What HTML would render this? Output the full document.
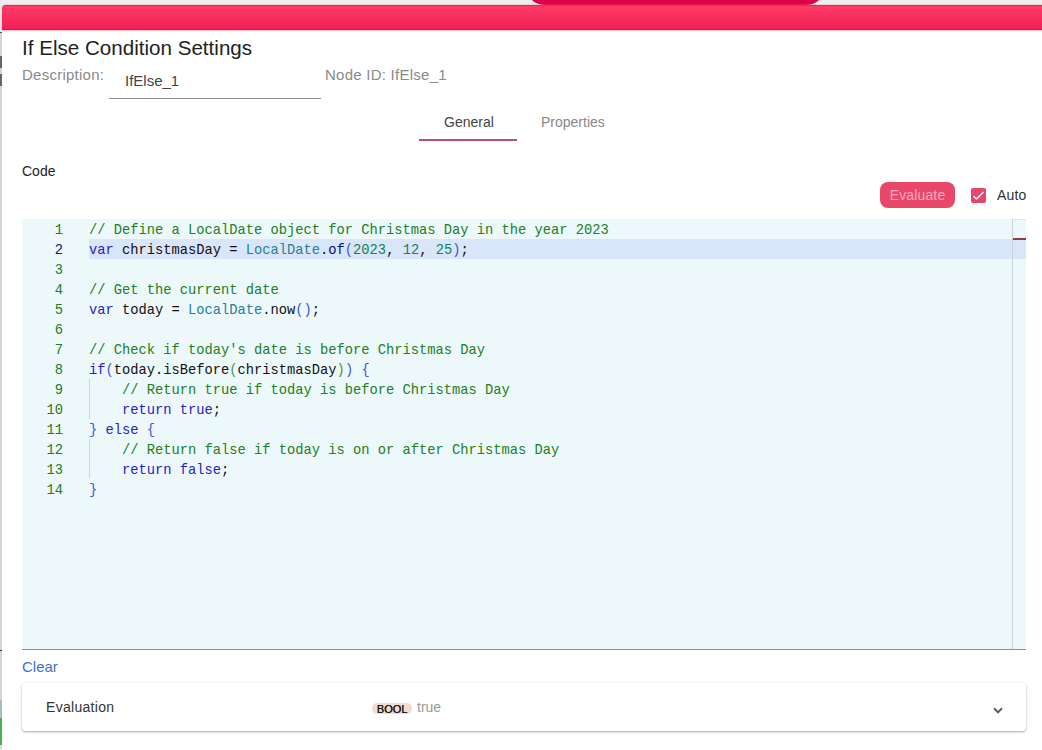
<!DOCTYPE html>
<html><head><meta charset="utf-8">
<style>
*{margin:0;padding:0;box-sizing:border-box}
html,body{width:1042px;height:750px;overflow:hidden;background:#fff;font-family:"Liberation Sans",sans-serif}
.abs{position:absolute}
#topbg{left:0;top:0;width:1042px;height:6px;background:#eeefef}
#tab{left:525px;top:-20px;width:301px;height:24.7px;background:#dc0044;border-radius:0 0 20px 20px}
#leftstrip{left:0;top:0;width:2px;height:750px;background:#d4d4d4}
#bar{left:2px;top:5px;width:1040px;height:25px;border-radius:4px 0 0 0;background:linear-gradient(#ff3d68,#f01e55);box-shadow:inset 0 1px 0 rgba(100,50,65,.4),inset 0 -1px 0 rgba(130,20,50,.3),0 -1px 1px rgba(255,110,140,.25),0 1px 2px rgba(240,40,90,.35)}
#dlg{left:2px;top:30px;width:1040px;height:720px;background:#fff}
.t{position:absolute;white-space:pre;line-height:1}
#title{left:22px;top:37.5px;font-size:20.6px;letter-spacing:0;color:#222}
#desc{left:22px;top:67px;font-size:15px;letter-spacing:.25px;color:#8a8a8a}
#inp{left:125px;top:73px;font-size:15px;color:#444}
#inpline{left:109px;top:98px;width:212px;height:1px;background:#8d8d8d}
#nodeid{left:325px;top:67px;font-size:15px;letter-spacing:.25px;color:#8a8a8a}
#tgen{left:444px;top:115px;font-size:14px;color:#444}
#tprop{left:541px;top:115px;font-size:14px;color:#888}
#tline{left:419px;top:139px;width:98px;height:2px;background:#bb5169}
#code{left:22px;top:164px;font-size:14px;color:#222}
#evbtn{left:880px;top:182px;width:75px;height:26px;border-radius:8px;background:#e9476a;color:#fba7bd;font-size:14px;letter-spacing:.15px;text-align:center;line-height:27px}
#chk{left:971px;top:188px;width:15px;height:15px;border-radius:2px;background:#e9456a}
#auto{left:997px;top:188px;font-size:14px;letter-spacing:.15px;color:#333}
#ed{left:22px;top:219px;width:1004px;height:431px;background:#edf8fb;border-bottom:1px solid #8b9091;overflow:hidden}
#ruler{left:990px;top:0;width:1px;height:430px;background:#c9d2d4}
#rmark{left:991px;top:19px;width:13px;height:2px;background:#913b45}
#hl{left:67px;top:20px;width:937px;height:20px;background:#d9e5f8}
.ln{position:absolute;left:0;width:41px;padding-top:2px;text-align:right;font-family:"Liberation Mono",monospace;font-size:13.75px;line-height:20px;color:#237a2b}
.cl{position:absolute;left:67px;font-family:"Liberation Mono",monospace;font-size:13.75px;line-height:20px;white-space:pre;color:#111;padding-top:2px}
.cm{color:#218021}.kw{color:#2a22c0}.ty{color:#267f99}.nu{color:#098658}.br{color:#3d55d6}.br2{color:#3f9a3f}.fn{color:#001080}
.guide{position:absolute;left:67px;width:1px;background:#d3d3d3}
#clear{left:22px;top:659px;font-size:15px;color:#3a73d1}
#card{left:22px;top:683px;width:1004px;height:48px;border-radius:4px;background:#fff;box-shadow:0 1px 3px rgba(0,0,0,.25),0 1px 1px rgba(0,0,0,.12)}
#evl{left:46px;top:700px;font-size:14px;letter-spacing:.3px;color:#333}
#bool{left:372px;top:703px;width:40px;height:11px;border-radius:5px;background:#f2dcd2;font-size:11px;color:#1a1a1a;text-align:center;line-height:12px;letter-spacing:0;text-shadow:.35px 0 0 #1a1a1a}
#true{left:417px;top:700px;font-size:14px;color:#999}
</style></head><body>
<div class="abs" id="topbg"></div>
<div class="abs" id="tab"></div>
<div class="abs" id="leftstrip"></div>
<div class="abs" style="left:0;top:0;width:2px;height:32px;background:#e9eaea"></div>
<div class="abs" style="left:0;top:32px;width:2px;height:1px;background:#555"></div>
<div class="abs" style="left:0;top:56px;width:2px;height:12px;background:#5f6a6e"></div>
<div class="abs" style="left:0;top:74px;width:2px;height:12px;background:#5f6a6e"></div>
<div class="abs" style="left:0;top:650px;width:2px;height:1px;background:#333"></div>
<div class="abs" style="left:0;top:700px;width:2px;height:18px;background:#a9bcc4"></div>
<div class="abs" style="left:0;top:718px;width:2px;height:27px;background:#4caf50"></div>
<div class="abs" style="left:0;top:745px;width:2px;height:5px;background:#ddd"></div>
<div class="abs" id="dlg"></div>
<div class="abs" id="bar"></div>

<div class="t" id="title">If Else Condition Settings</div>
<div class="t" id="desc">Description:</div>
<div class="t" id="inp">IfElse_1</div>
<div class="abs" id="inpline"></div>
<div class="t" id="nodeid">Node ID: IfElse_1</div>
<div class="t" id="tgen">General</div>
<div class="t" id="tprop">Properties</div>
<div class="abs" id="tline"></div>
<div class="t" id="code">Code</div>
<div class="abs" id="evbtn">Evaluate</div>
<div class="abs" id="chk"><svg width="15" height="15" viewBox="0 0 15 15"><path d="M2.4 8 L5.4 11 L12.6 4" fill="none" stroke="#fff" stroke-width="1.5"/></svg></div>
<div class="t" id="auto">Auto</div>

<div class="abs" id="ed">
  <div class="abs" id="hl"></div>
  <div class="abs" id="ruler"></div>
  <div class="abs" id="rmark"></div>
  <div class="abs" style="left:991px;top:0;width:13px;height:1px;background:#dfe5e7"></div>
  <div class="guide" style="top:160px;height:40px"></div>
  <div class="guide" style="top:220px;height:40px"></div>
  <div class="ln" style="top:0">1</div>
  <div class="ln" style="top:20px;color:#0b216f">2</div>
  <div class="ln" style="top:40px">3</div>
  <div class="ln" style="top:60px">4</div>
  <div class="ln" style="top:80px">5</div>
  <div class="ln" style="top:100px">6</div>
  <div class="ln" style="top:120px">7</div>
  <div class="ln" style="top:140px">8</div>
  <div class="ln" style="top:160px">9</div>
  <div class="ln" style="top:180px">10</div>
  <div class="ln" style="top:200px">11</div>
  <div class="ln" style="top:220px">12</div>
  <div class="ln" style="top:240px">13</div>
  <div class="ln" style="top:260px">14</div>
  <div class="cl" style="top:0"><span class="cm">// Define a LocalDate object for Christmas Day in the year 2023</span></div>
  <div class="cl" style="top:20px"><span class="kw">var</span> christmasDay = <span class="ty">LocalDate</span>.<span class="fn">of</span><span class="br">(</span><span class="nu">2023</span>, <span class="nu">12</span>, <span class="nu">25</span><span class="br">)</span>;</div>
  <div class="cl" style="top:60px"><span class="cm">// Get the current date</span></div>
  <div class="cl" style="top:80px"><span class="kw">var</span> today = <span class="ty">LocalDate</span>.now<span class="br">()</span>;</div>
  <div class="cl" style="top:120px"><span class="cm">// Check if today's date is before Christmas Day</span></div>
  <div class="cl" style="top:140px"><span class="kw">if</span><span class="br">(</span>today.isBefore<span class="br2">(</span>christmasDay<span class="br2">)</span><span class="br">)</span> <span class="br">{</span></div>
  <div class="cl" style="top:160px">    <span class="cm">// Return true if today is before Christmas Day</span></div>
  <div class="cl" style="top:180px">    <span class="kw">return</span> <span class="kw">true</span>;</div>
  <div class="cl" style="top:200px"><span class="br">}</span> <span class="kw">else</span> <span class="br">{</span></div>
  <div class="cl" style="top:220px">    <span class="cm">// Return false if today is on or after Christmas Day</span></div>
  <div class="cl" style="top:240px">    <span class="kw">return</span> <span class="kw">false</span>;</div>
  <div class="cl" style="top:260px"><span class="br">}</span></div>
</div>

<div class="t" id="clear">Clear</div>
<div class="abs" id="card"></div>
<div class="t" id="evl">Evaluation</div>
<div class="abs" id="bool">BOOL</div>
<div class="t" id="true">true</div>
<svg class="abs" style="left:990px;top:701px" width="16" height="16" viewBox="0 0 16 16"><path d="M4 7.3 L8 11.3 L12 7.3" fill="none" stroke="#5f5f5f" stroke-width="2"/></svg>
</body></html>
